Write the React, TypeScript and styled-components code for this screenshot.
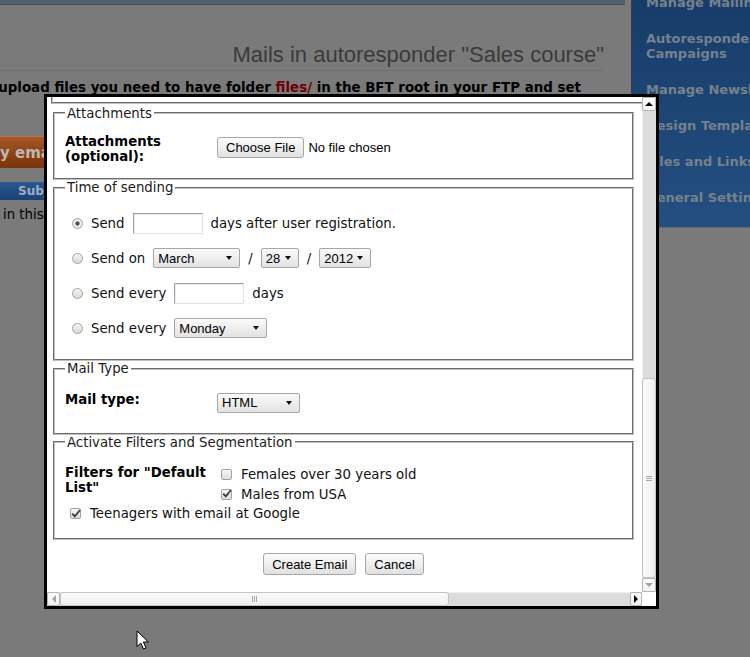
import React from "react";
import styled, { createGlobalStyle, css } from "styled-components";

const sans = `"DejaVu Sans", Verdana, sans-serif`;
const arial = `"Liberation Sans", Arial, sans-serif`;

const GlobalStyle = createGlobalStyle`
  *, *::before, *::after { box-sizing: border-box; }
  html, body { margin: 0; padding: 0; }
  body { background: #7a7a7a; font-family: ${sans}; }
`;

/* ---------- dimmed admin page behind the dialog ---------- */

const Screen = styled.div`
  position: relative;
  display: flex;
  align-items: flex-start;
  width: 750px;
  height: 657px;
  overflow: hidden;
  background: #7a7a7a;
`;

const MainColumn = styled.main`
  flex: none;
  width: 648px;
  margin: 0 6px 0 -23px;
`;

const TopStrip = styled.div`
  height: 5px;
  background: #53626f;
  border-bottom: 1px solid #46515b;
`;

const PageTitle = styled.h2`
  margin: 37px 21px 0 0;
  padding: 0 0 2px;
  border-bottom: 1px solid #66717c;
  font: normal 22px/26px ${arial};
  color: #3a3a3a;
  text-align: right;
`;

const Notice = styled.p`
  margin: 9px 0 0;
  font: bold 13.4px/16px ${sans};
  color: #000;
  white-space: nowrap;
`;

const FolderName = styled.span`
  color: #6c0000;
`;

const AddButton = styled.div`
  display: flex;
  align-items: center;
  width: max-content;
  height: 32px;
  margin: 40px 0 0 -19px;
  padding: 0 10px;
  background: linear-gradient(#a65a2a, #8a3f12 60%, #7a340a);
  border-top: 1px solid #b5744a;
  font: bold 15px ${sans};
  color: #bdb7b1;
`;

const ListHead = styled.div`
  display: flex;
  align-items: center;
  height: 18px;
  margin-top: 14px;
  padding-left: 41px;
  background: linear-gradient(#2a5890, #1a4172);
  font: bold 12px ${sans};
  color: #a2afc0;
`;

const EmptyNote = styled.div`
  margin-top: 7px;
  padding-left: 26px;
  font: 13.3px/15px ${sans};
  color: #000;
  white-space: nowrap;
`;

const SideMenu = styled.nav`
  flex: none;
  display: flex;
  flex-direction: column;
  gap: 21px;
  width: 209px;
  height: 228px;
  padding: 0 14px;
  background: linear-gradient(#173c69, #234f80);
  border-left: 1px solid #2a3f58;
  border-bottom: 1px solid #666;
`;

const MenuLink = styled.div`
  font: bold 13px/15px ${sans};
  color: #76818d;
  &:first-child {
    margin-top: -5.5px;
  }
`;

/* ---------- dialog ---------- */

const Dialog = styled.div`
  position: absolute;
  left: 44px;
  top: 94px;
  width: 615px;
  height: 515px;
  border: 3px solid #000;
  background: #fff;
  display: grid;
  grid-template-columns: 1fr 14px;
  grid-template-rows: 1fr 14px;
`;

const Viewport = styled.div`
  overflow: hidden;
`;

const FormBody = styled.form`
  width: 589px;
  padding-left: 4px;
  font: 13.3px/15px ${sans};
  color: #111;
`;

const EditorTail = styled.div`
  width: 870px;
  height: 6.5px;
  border-left: 2px groove #c0c0c0;
  border-bottom: 2px groove #c0c0c0;
`;

const Group = styled.fieldset<{ $first?: boolean }>`
  min-width: 0;
  margin: ${(p) => (p.$first ? "2px" : "0")} 2px 0;
  padding: 4px 10px 8px;
  border: 2px groove #c0c0c0;
`;

const GroupTitle = styled.legend`
  padding: 0 2px;
  font: 13.3px/15px ${sans};
  color: #1a1a1a;
`;

const FieldRow = styled.div<{ $top: number; $bottom: number }>`
  display: grid;
  grid-template-columns: 152px 1fr;
  align-items: start;
  margin: ${(p) => p.$top}px 0 ${(p) => p.$bottom}px;
`;

const FieldLabel = styled.div`
  font-weight: bold;
  color: #000;
`;

const FilePicker = styled.div`
  display: flex;
  align-items: center;
  gap: 4px;
  margin-top: 2.5px;
  font: 13px ${arial};
  color: #000;
`;

const PushButton = styled.button<{ $h?: number }>`
  height: ${(p) => p.$h ?? 22}px;
  margin: 0;
  padding: 0 8px;
  border: 1px solid #a6a6a6;
  border-radius: 3px;
  background: linear-gradient(#fcfcfc, #e1e1e1);
  font: 13px ${arial};
  color: #000;
`;

const ScheduleList = styled.div`
  margin: 6.5px 0 5.5px;
`;

const ScheduleRow = styled.div`
  display: flex;
  align-items: center;
  gap: 8px;
  height: 35px;
  white-space: nowrap;
`;

const Radio = styled.input.attrs({ type: "radio", name: "when" })`
  appearance: none;
  flex: none;
  width: 11px;
  height: 11px;
  margin: 0 0 0 7px;
  border: 1px solid #a2a2a2;
  border-radius: 50%;
  background: linear-gradient(#f5f5f5, #d8d8d8);
  &:checked {
    background: radial-gradient(circle, #4e4e4e 0 1.7px, #f2f2f2 2.5px, #dadada 100%);
  }
`;

const DaysInput = styled.input.attrs({ type: "text" })`
  width: 70px;
  height: 21px;
  margin: 0;
  padding: 1px 3px;
  border: 1px solid;
  border-color: #a3a3a3 #e2e2e2 #e2e2e2 #a3a3a3;
  box-shadow: inset 1px 1px 0 #ececec;
  background: #fff;
  font: 13px ${arial};
`;

const Dropdown = styled.div<{ $w: number; $shift?: number }>`
  flex: none;
  display: inline-flex;
  align-items: center;
  justify-content: space-between;
  width: ${(p) => p.$w}px;
  height: 20px;
  margin-top: ${(p) => p.$shift ?? 0}px;
  padding: 0 7px 0 4px;
  border: 1px solid #a7a7a7;
  border-radius: 2px;
  background: linear-gradient(#fbfbfb, #e2e2e2);
  font: 13px ${arial};
  color: #000;
`;

const Caret = styled.span`
  width: 0;
  height: 0;
  border-left: 3px solid transparent;
  border-right: 3px solid transparent;
  border-top: 4px solid #111;
`;

const FilterGrid = styled.div`
  display: grid;
  grid-template-columns: 151px 1fr;
  grid-auto-rows: 19.5px;
  margin: 11.5px 0 6.5px;
`;

const FilterLabel = styled(FieldLabel)`
  grid-row: 1 / span 2;
`;

const CheckItem = styled.div<{ $wide?: boolean }>`
  display: flex;
  align-items: center;
  gap: 9px;
  padding-left: 5px;
  white-space: nowrap;
  ${(p) => p.$wide && css`grid-column: 1 / span 2;`}
`;

const Box = styled.span`
  flex: none;
  display: grid;
  place-items: center;
  width: 11px;
  height: 11px;
  border: 1px solid #a3a3a3;
  border-radius: 2px;
  background: linear-gradient(#f7f7f7, #dcdcdc);
  overflow: visible;
`;

const Tick = styled.svg`
  overflow: visible;
  margin: -1px -1px 0 0;
`;

const ButtonBar = styled.div`
  display: flex;
  justify-content: center;
  gap: 9px;
  margin-top: 13px;
`;

/* ---------- dialog scrollbars ---------- */

const VBar = styled.div`
  display: flex;
  flex-direction: column;
  background: #dcdcdc;
`;

const HBar = styled.div`
  display: flex;
  background: #dcdcdc;
`;

const Corner = styled.div`
  background: #fff;
`;

const StepButton = styled.div<{ $w?: number }>`
  flex: none;
  display: grid;
  place-items: center;
  width: ${(p) => p.$w ?? 14}px;
  height: 14px;
  border: 1px solid #b4b4b4;
  border-radius: 2px;
  background: linear-gradient(#fefefe, #f1f1f1);
`;

type Dir = "up" | "down" | "left" | "right";

const Arrow = styled.span<{ $dir: Dir; $dim?: boolean }>`
  width: 0;
  height: 0;
  ${({ $dir, $dim }) => {
    const c = $dim ? "#a3a3a3" : "#000";
    switch ($dir) {
      case "up":
        return css`border-left: 4px solid transparent; border-right: 4px solid transparent; border-bottom: 4px solid ${c};`;
      case "down":
        return css`border-left: 4px solid transparent; border-right: 4px solid transparent; border-top: 4px solid ${c};`;
      case "left":
        return css`border-top: 4px solid transparent; border-bottom: 4px solid transparent; border-right: 4px solid ${c};`;
      default:
        return css`border-top: 4px solid transparent; border-bottom: 4px solid transparent; border-left: 4px solid ${c};`;
    }
  }}
`;

const Track = styled.div<{ $vertical?: boolean }>`
  flex: 1;
  display: flex;
  flex-direction: ${(p) => (p.$vertical ? "column" : "row")};
  justify-content: ${(p) => (p.$vertical ? "flex-end" : "flex-start")};
  box-shadow: ${(p) => (p.$vertical ? "inset 1px 0 #efefef" : "inset 0 1px #efefef")};
`;

const Thumb = styled.div<{ $vertical?: boolean; $size: number }>`
  flex: none;
  display: grid;
  place-items: center;
  ${(p) => (p.$vertical ? css`height: ${p.$size}px;` : css`width: ${p.$size}px;`)}
  border: 1px solid #c4c4c4;
  border-radius: 3px;
  background: linear-gradient(${(p) => (p.$vertical ? "to right" : "to bottom")}, #fbfbfb, #eeeeee);
`;

const Grip = styled.span<{ $vertical?: boolean }>`
  ${(p) =>
    p.$vertical
      ? css`width: 6px; height: 5px; background: repeating-linear-gradient(#a9a9a9 0 1px, transparent 1px 2px);`
      : css`width: 5px; height: 6px; background: repeating-linear-gradient(to right, #a9a9a9 0 1px, transparent 1px 2px);`}
`;

const Pointer = styled.svg`
  position: absolute;
  left: 136px;
  top: 630px;
`;

const menu = [
  "Manage Mailing Lists",
  "Autoresponder Campaigns",
  "Manage Newsletters",
  "Design Templates",
  "Files and Links",
  "General Settings",
];

function TickMark() {
  return (
    <Tick width="10" height="9" viewBox="0 0 10 9">
      <path d="M1.2 4.6 L3.8 7.4 L9 1" fill="none" stroke="#3a3a3a" strokeWidth="1.8" />
    </Tick>
  );
}

export default function App() {
  return (
    <>
      <GlobalStyle />
      <Screen>
        <MainColumn>
          <TopStrip />
          <PageTitle>Mails in autoresponder "Sales course"</PageTitle>
          <Notice>
            To upload files you need to have folder <FolderName>files/</FolderName> in the BFT root in your FTP and set
          </Notice>
          <AddButton>Copy email</AddButton>
          <ListHead>Subject</ListHead>
          <EmptyNote>in this list.</EmptyNote>
        </MainColumn>
        <SideMenu>
          {menu.map((m) => (
            <MenuLink key={m}>{m}</MenuLink>
          ))}
        </SideMenu>

        <Dialog role="dialog">
          <Viewport>
            <FormBody onSubmit={(e) => e.preventDefault()}>
              <EditorTail />

              <Group $first>
                <GroupTitle>Attachments</GroupTitle>
                <FieldRow $top={9.5} $bottom={6}>
                  <FieldLabel>
                    Attachments
                    <br />
                    (optional):
                  </FieldLabel>
                  <FilePicker>
                    <PushButton type="button" $h={21}>Choose File</PushButton>
                    <span>No file chosen</span>
                  </FilePicker>
                </FieldRow>
              </Group>

              <Group>
                <GroupTitle>Time of sending</GroupTitle>
                <ScheduleList>
                  <ScheduleRow>
                    <Radio defaultChecked />
                    <span>Send</span>
                    <DaysInput />
                    <span>days after user registration.</span>
                  </ScheduleRow>
                  <ScheduleRow>
                    <Radio />
                    <span>Send on</span>
                    <Dropdown $w={87}>
                      March <Caret />
                    </Dropdown>
                    <span>/</span>
                    <Dropdown $w={38}>
                      28 <Caret />
                    </Dropdown>
                    <span>/</span>
                    <Dropdown $w={52}>
                      2012 <Caret />
                    </Dropdown>
                  </ScheduleRow>
                  <ScheduleRow>
                    <Radio />
                    <span>Send every</span>
                    <DaysInput />
                    <span>days</span>
                  </ScheduleRow>
                  <ScheduleRow>
                    <Radio />
                    <span>Send every</span>
                    <Dropdown $w={93}>
                      Monday <Caret />
                    </Dropdown>
                  </ScheduleRow>
                </ScheduleList>
              </Group>

              <Group>
                <GroupTitle>Mail Type</GroupTitle>
                <FieldRow $top={11.5} $bottom={12}>
                  <FieldLabel>Mail type:</FieldLabel>
                  <Dropdown $w={83} $shift={1}>
                    HTML <Caret />
                  </Dropdown>
                </FieldRow>
              </Group>

              <Group>
                <GroupTitle>Activate Filters and Segmentation</GroupTitle>
                <FilterGrid>
                  <FilterLabel>Filters for "Default List"</FilterLabel>
                  <CheckItem>
                    <Box />
                    <span>Females over 30 years old</span>
                  </CheckItem>
                  <CheckItem>
                    <Box>
                      <TickMark />
                    </Box>
                    <span>Males from USA</span>
                  </CheckItem>
                  <CheckItem $wide>
                    <Box>
                      <TickMark />
                    </Box>
                    <span>Teenagers with email at Google</span>
                  </CheckItem>
                </FilterGrid>
              </Group>

              <ButtonBar>
                <PushButton type="submit">Create Email</PushButton>
                <PushButton type="button">Cancel</PushButton>
              </ButtonBar>
            </FormBody>
          </Viewport>

          <VBar>
            <StepButton>
              <Arrow $dir="up" />
            </StepButton>
            <Track $vertical>
              <Thumb $vertical $size={200}>
                <Grip $vertical />
              </Thumb>
            </Track>
            <StepButton>
              <Arrow $dir="down" $dim />
            </StepButton>
          </VBar>

          <HBar>
            <StepButton $w={13}>
              <Arrow $dir="left" $dim />
            </StepButton>
            <Track>
              <Thumb $size={389}>
                <Grip />
              </Thumb>
            </Track>
            <StepButton $w={12}>
              <Arrow $dir="right" />
            </StepButton>
          </HBar>
          <Corner />
        </Dialog>

        <Pointer width="14" height="21" viewBox="0 0 14 21">
          <path
            d="M1 1 L1 16.5 L4.8 13 L7.5 19 L10 17.9 L7.4 12 L12.4 12 Z"
            fill="#fff"
            stroke="#000"
            strokeWidth="1"
            strokeLinejoin="miter"
          />
        </Pointer>
      </Screen>
    </>
  );
}
